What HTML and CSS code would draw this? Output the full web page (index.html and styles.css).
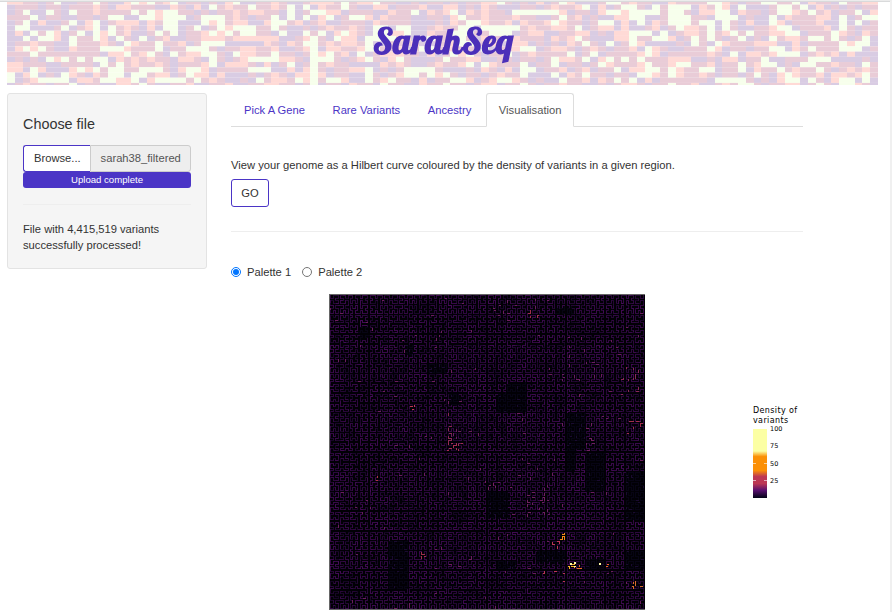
FILE: index.html
```html
<!DOCTYPE html>
<html lang="en">
<head>
<meta charset="utf-8">
<title>SarahSeq</title>
<link rel="stylesheet" href="styles.css">
</head>
<body>
<header class="banner">
  <canvas class="mosaic" id="mosaic" width="871" height="83"></canvas>
  <h1 class="brand">SarahSeq</h1>
</header>
<div class="layout">
  <aside class="well">
    <h4>Choose file</h4>
    <div class="file-row"><span class="browse">Browse...</span><span class="file-name">sarah38_filtered</span></div>
    <div class="progress">Upload complete</div>
    <hr>
    <p>File with 4,415,519 variants successfully processed!</p>
  </aside>
  <main>
    <nav class="tabs">
      <a>Pick A Gene</a><a>Rare Variants</a><a>Ancestry</a><a class="active">Visualisation</a>
    </nav>
    <p class="intro">View your genome as a Hilbert curve coloured by the density of variants in a given region.</p>
    <button class="go">GO</button>
    <hr>
    <div class="palettes">
      <label><input type="radio" name="palette" checked><span>Palette 1</span></label>
      <label><input type="radio" name="palette"><span>Palette 2</span></label>
    </div>
    <div class="plot">
      <canvas class="hilbert" id="hilbert" width="315" height="314"></canvas>
      <div class="legend">
        <div class="legend-title">Density of<br>variants</div>
        <div class="scale">
          <div class="ramp"><i></i><i></i></div>
          <div class="ticks"><span>100</span><span>75</span><span>50</span><span>25</span></div>
        </div>
      </div>
    </div>
  </main>
</div>
<script src="script.js"></script>
</body>
</html>
```
FILE: styles.css
```css
* { box-sizing: border-box; }
html { background: #fff; overflow: hidden; }
body {
  margin: 0;
  height: 612px;
  overflow: hidden;
  border-top: 1px solid #ececec;
  border-right: 2px solid #f0f0f0;
  font: 11.2px/16px "Liberation Sans", Arial, sans-serif;
  color: #333;
}
.banner {
  position: relative;
  height: 84px;
  padding-left: 7px;
  border-top: 1px solid #d9dadb;
}
.mosaic { display: block; }
.brand {
  position: absolute;
  left: 373px;
  top: 16px;
  margin: 0;
  font: 700 35px/46px "Lobster", "Liberation Serif", cursive;
  letter-spacing: .35px;
  color: #4b2fb9;
  white-space: nowrap;
}
.layout { display: flex; padding: 8px 0 0 7px; gap: 24px; }
.well {
  width: 200px;
  height: 176px;
  flex: none;
  padding: 15px;
  border: 1px solid #e3e3e3;
  border-radius: 3px;
  background: #f5f5f5;
}
h4 { margin: 7px 0 12px; font-size: 14.4px; line-height: 17px; font-weight: 400; }
.file-row { display: flex; height: 27px; }
.browse, .file-name { line-height: 25px; white-space: nowrap; }
.browse {
  width: 67px;
  padding-left: 10px;
  background: #fff;
  border: 1px solid #4b35c6;
  border-right: 0;
  border-radius: 3px 0 0 3px;
}
.file-name {
  flex: 1;
  padding-left: 9.6px;
  color: #555;
  background: #eee;
  border: 1px solid #ccc;
  border-radius: 0 3px 3px 0;
}
.progress {
  height: 16px;
  border-radius: 3px;
  background: #4b35c6;
  color: #fff;
  font-size: 9.6px;
  text-align: center;
}
hr { margin: 16px 0; border: 0; border-top: 1px solid #eee; }
.well p { margin: 0; }
main { width: 572px; }
.tabs { display: flex; height: 34px; border-bottom: 1px solid #ddd; }
.tabs a {
  height: 34px;
  margin-right: 1.6px;
  padding: 8px 12px;
  border: 1px solid transparent;
  border-radius: 3px 3px 0 0;
  color: #4b35c6;
}
.tabs .active { background: #fff; border-color: #ddd #ddd #fff; color: #555; }
.intro { margin: 30px 0 6px; }
.go {
  display: block;
  width: 38px;
  height: 28px;
  padding: 0;
  border: 1px solid #4b35c6;
  border-radius: 3px;
  background: #fff;
  color: #333;
  font: inherit;
}
main hr { margin: 24px 0 32px; }
.palettes { display: flex; gap: 11px; height: 16px; }
.palettes label { display: flex; align-items: center; gap: 6px; }
.palettes input { width: 10px; height: 10px; margin: 0; }
.plot { display: flex; margin: 14px 0 0 98px; }
.hilbert { flex: none; width: 316px; height: 316px; border: solid #666; border-width: 1px 0 1px 1px; }
.legend {
  margin: 112px 0 0 108px;
  font: 8px/10px "DejaVu Sans", sans-serif;
  color: #000;
}
.legend-title { letter-spacing: .38px; white-space: nowrap; }
.scale { display: flex; gap: 4px; margin-top: 3px; }
.ramp {
  display: flex;
  flex-direction: column;
  width: 14px;
  height: 69px;
  padding-top: 34px;
  background: linear-gradient(#fcffa4 0 32%, #fb9006 40% 60%, #bc3754 69% 79%, #57106e 89%, #08051d 99%);
}
.ramp i { height: 1px; margin-bottom: 16px; background: linear-gradient(90deg, #fff9 3px, transparent 3px 11px, #fff9 11px); }
.ticks { display: flex; flex-direction: column; font-size: 6.5px; line-height: 8px; margin: -4px 0 0 -1px; gap: 9.3px; }
```
FILE: script.js
```js
const COLOURS = { L: '#d9cce3', P: '#e9ccd7', S: '#ffdad6', W: '#f7ffec' };
const ROWS = `
SSPPLPWLLPPWPLLSWSWPSWLPPLPLSWLLPPSPLL PSSSPWPSSWPPLLPLPPLPLPPSSWPLPLSLPWSLLL PWWPSPPLLSPPPPWWSPLPPWWPPWLSPPLWPPSS
LPPPLPPLPPPSPLSSPPPLLSPLSLWPSPPWPPSPWL WLSPPWPLLSSLPPPSLLSSLPLSPLLLPPLPSPPSWL SLPWWPLWPWWWLSPWSLWLLLPWWPWLSLPLPLPP
LPWLLWPLWPPSPPPPWPWSWWPPLPLPPSPSSPPLWL PWWSSLPPPLLSPPWLSPSWLSPSPPLWWWWWWSLPPL SWWSWWWWPWWPLSSWWLSPPLPWWSPWPSLPPWLS
PPPWLPPLLPPLPWWLLWWSWWWLPWWWPSPLPPWLWL WLSWLPWWSLSPPPLLPPLSWPPSPPPSPPLLPWPSLP LLSSWWLLPWWWPPLWWWLPLLWLSPPPSSLWLPWW
LPWLSLLPWLSWLPSSSLSPWWLLLWSWPSSLLSWWPS LPSLLPPPLSPPPPLLLPLSPWWSPPSLSPPSWSPPLP WWLSLWLSPWWWPWWLWPLSLLWSLPPPSLLWLWLP
LWWLLLPWLPSWLWPSPLSLWWLPWLPWSWWWPPWPLL PLPSPPSPLWWLWWLLPSPPWWLWWWWWPSPPSSPWLP SSLSLLPSLPWSSPWLWPLLPPSWWLPPPSLWPLPP
LSLWPWSLPWLWSWPSLLPWPWLPPSWSWPWWPPLWLL WPWLSWSPLWWSSWLLSPPWWWPPWWWLPSSLLPPSSL PLSSWWWLWLPSSPWPSWPWPPSSWWLPPPWSPLSP
LLWLWWSLWPPWSLWPLWLPSLLPPSSSPSSSSSSLLP SWPLWSSLWWWWSSLLWPPPWPLSPPWSPPPLSPSWPL LLSSWPPWWSLPWPWPLPWLPLWPSSPWWPWPLPWL
LPPSPPLLWPPPSPLWSPPWPPSLPWWWLLLLLSPLSP WWPSPSSPWLLPPPSLLPPSWWPPSLLSSLPLPLSPWP LWLPWSLLLLPLWPLWSPPPSSSLLSLPPPPWSWWL
LSWSWPLLSPPPWWWSPPPWLPPWWWPLPPSSPPSLLP SWLSSPPSWWPPSLPWWPPSPPLWLPPSWWLPSSPLPS PLPPSLWSPLLPPPWSLPPLPPWWLSPWPPPWWWLP
PPPWPPPPPPPPLSSWPSWPLWPSSWWPLWSSPPWPPL PWSWPSLWLPSSSPPLSLPWSWPLPPWLPSPPPPWLPW LPPPPSWSLPPPPPSPLWLSSPSWWWLPSPSLSLLL
LPLPLWSWPWPWWLSPSPSPPLSSPLWPLPSWWWWSSP LWWWPLPSWPLSWPLLLPWPPSSLLPPLPPLPWSSPWL SWPWPWPPPSSSLLPLSSLPPWLLPPPWWWLLLLPL
SSPPPLLPPPPLWPWPSPPSPLPPPSWLSSSPLSLPWL PWPSPPLLLLSPSPLLPSPPSWLWSPPPWLPPWLPPLP WSPPPSWPPSWWPPSLPPWPSWWLPLWWPPSPPLWP
SSLWSLLLSWSWPWWPPWWWPLSWWSLPPPPWWWLLSL SWPLPPSSWLPLPWWWWPLLLPLSPLSLWWLPPSLPSL PPWLSSWWPWSPPWWLPPWLSPPWPSPPWPLPSPSP
WLSWLPLWSPLSPWWLWWPSSLPWSSLSLLLPLPSPLS SWSLPPLLWPLPSWWPWSWPLPPLPSPPWLLLWLSPWP PLPPLWWSPWSPPSPLPPLPWPLSWSPPSLSSPSWP
WLPSWWWWLSSPWWSSWLSWWWWPWPSPLLPLWPSSPW SWPWWSLLWPSWPPLSLPPWWSLPSWWSPLPLLWPPSL SPWPWLSLPPPPPPLWWWWPLPLSWWLWPLSWWLWL
LPSPPLPPWLPPLLSSPWPLLPPSLLPPSLLPPSSPPL PWLPPLSPPLWPPLLSPPWPPLPSSLPPWPLPPSPPLL PLPSSPLPPWPPSLLPSPWWPLPPSSLPWPLWWSPL`.trim().split('\n').map(r => r.replace(/ /g, ''));

const banner = document.getElementById('mosaic').getContext('2d');
const tileW = 871 / 112, tileH = 5.22;
ROWS.forEach((row, y) => {
  [...row].forEach((c, x) => {
    banner.fillStyle = COLOURS[c];
    const left = Math.round(x * tileW);
    banner.fillRect(left, y * tileH - 2.6, Math.round((x + 1) * tileW) - left, tileH);
  });
});

// Deterministic noise so the curve looks the same on every load.
let seed = 38;
const random = () => (seed = (seed * 1664525 + 1013904223) >>> 0) / 4294967296;

const N = 128;
function point(d) {
  let x = 0, y = 0;
  for (let s = 1; s < N; s *= 2) {
    const rx = 1 & (d >> 1), ry = 1 & (d ^ rx);
    if (!ry) {
      if (rx) { x = s - 1 - x; y = s - 1 - y; }
      [x, y] = [y, x];
    }
    x += s * rx; y += s * ry; d >>= 2;
  }
  return [x, y];
}

// Regions with almost no variants: x, y, width, height.
const gaps = [
  [177, 88, 20, 30], [167, 98, 12, 20], [236, 118, 20, 37], [236, 155, 10, 22],
  [256, 157, 20, 39], [157, 197, 21, 27], [295, 177, 20, 49], [59, 246, 20, 50],
  [30, 32, 8, 12], [77, 48, 7, 12], [98, 68, 20, 10], [120, 98, 9, 12],
  [167, 266, 20, 8], [207, 255, 28, 12], [256, 262, 20, 12], [295, 256, 20, 20], [226, 12, 16, 7]
];
// Dense clusters: x, y, width, height, probability, colour.
const clusters = [
  [118, 118, 5, 40, .3, '#8a2956'], [118, 148, 16, 9, .45, '#a42d50'],
  [197, 15, 12, 8, .2, '#a12f4b'], [160, 5, 25, 20, .08, '#702060'],
  [155, 187, 32, 7, .25, '#752060'], [197, 195, 22, 27, .18, '#702060'],
  [230, 40, 35, 45, .07, '#6b1e60'], [291, 70, 22, 30, .08, '#8a2956'],
  [256, 120, 9, 36, .12, '#702060'], [230, 239, 6, 7, .7, '#f58a18'],
  [218, 246, 12, 6, .2, '#bc3754'], [238, 267, 8, 7, .7, '#fbb12a'],
  [248, 270, 5, 6, .6, '#e8662a'], [275, 267, 6, 8, .4, '#e8662a'],
  [302, 286, 9, 9, .4, '#d86c2a'], [212, 275, 25, 12, .1, '#bc3754'],
  [80, 110, 5, 5, .5, '#bc3754'], [46, 182, 2, 7, .8, '#ac3a3c'],
  [90, 258, 5, 4, .6, '#a12f4b'], [298, 120, 15, 22, .08, '#a12f4b']
];
const within = (x, y, r) => x >= r[0] && x < r[0] + r[2] && y >= r[1] && y < r[1] + r[3];

const plot = document.getElementById('hilbert').getContext('2d');
plot.fillStyle = '#010005';
plot.fillRect(0, 0, 315, 314);
const step = 315 / N;
let drift = .5;
for (let d = 0; d < N * N - 1; d++) {
  const a = point(d).map(v => Math.floor(v * step + .8));
  const b = point(d + 1).map(v => Math.floor(v * step + .8));
  drift = drift * .86 + random() * .14;
  const v = Math.min(1, Math.max(.1, (drift - .5) * 1.5 + .48 + (random() - .5) * .5));
  let colour = `rgb(${14 + v * 56},${4 + v * 7},${28 + v * 60})`;
  if (gaps.some(r => within(a[0], a[1], r))) colour = random() < .1 ? '#1a0a30' : '#070414';
  else if (random() < .009) colour = '#6b1e5d';
  clusters.forEach(r => {
    if (within(a[0], a[1], r) && random() < r[4]) colour = r[5];
  });
  plot.fillStyle = colour;
  plot.fillRect(Math.min(a[0], b[0]), Math.min(a[1], b[1]),
    Math.abs(a[0] - b[0]) + 1, Math.abs(a[1] - b[1]) + 1);
}
plot.fillStyle = '#fcf5a0';
[[240, 268, 2, 2], [244, 267, 2, 2], [244, 271, 2, 1], [269, 268, 2, 2]].forEach(r => plot.fillRect(...r));
```
